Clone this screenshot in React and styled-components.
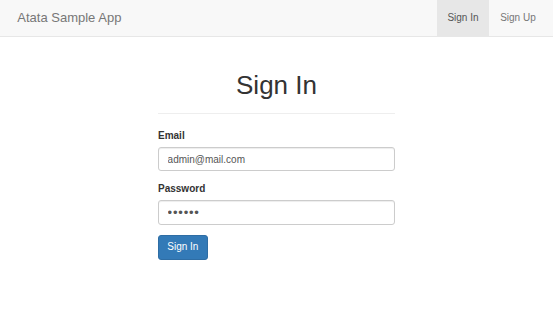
import React from 'react';
import styled, { createGlobalStyle } from 'styled-components';

const GlobalStyle = createGlobalStyle`
  * { box-sizing: border-box; }
  body {
    margin: 0;
    background: #fff;
    color: #333;
    font-family: "Liberation Sans", Arial, sans-serif;
    font-size: 10px;
    line-height: 14.3px;
  }
`;

const Navbar = styled.nav`
  display: flex;
  justify-content: space-between;
  align-items: stretch;
  height: 37px;
  padding: 0 6.5px;
  background: #f8f8f8;
  border-bottom: 1px solid #e7e7e7;
`;

const Brand = styled.a`
  display: flex;
  align-items: center;
  padding: 0 10.8px;
  font-size: 13px;
  color: #777;
  text-decoration: none;
`;

const NavList = styled.ul`
  display: flex;
  margin: 0;
  padding: 0;
  list-style: none;
`;

const NavItem = styled.li`
  display: flex;
  align-items: center;
  padding: 0 10.8px;
  color: ${p => (p.$active ? '#555' : '#777')};
  background: ${p => (p.$active ? '#e7e7e7' : 'transparent')};
`;

const Main = styled.main`
  width: 237px;
  margin: 0 auto;
`;

const PageHeader = styled.div`
  margin-top: 34px;
  margin-bottom: 15px;
  padding-bottom: 6.5px;
  border-bottom: 1px solid #eee;
`;

const Title = styled.h1`
  margin: 0 0 7px;
  font-size: 26px;
  font-weight: 500;
  line-height: 28.5px;
  text-align: center;
  color: #333;
`;

const FormGroup = styled.div`
  margin-bottom: 10.8px;
`;

const Label = styled.label`
  display: block;
  margin-bottom: 3.6px;
  font-weight: bold;
`;

const Input = styled.input`
  display: block;
  width: 100%;
  height: 24.5px;
  padding: 4.3px 8.6px;
  font-family: inherit;
  font-size: ${p => (p.type === 'password' ? '13px' : '10px')};
  letter-spacing: ${p => (p.type === 'password' ? '0.8px' : 'normal')};
  color: #555;
  background: #fff;
  border: 1px solid #ccc;
  border-radius: 3px;
  box-shadow: inset 0 1px 1px rgba(0, 0, 0, 0.075);
  outline: none;
`;

const Button = styled.button`
  display: inline-block;
  height: 24.5px;
  padding: 0 8.3px;
  font-family: inherit;
  font-size: 10px;
  line-height: 14.3px;
  color: #fff;
  background: #337ab7;
  border: 1px solid #2e6da4;
  border-radius: 3px;
  cursor: pointer;
`;

export default function App() {
  return (
    <>
      <GlobalStyle />
      <Navbar>
        <Brand href="#">Atata Sample App</Brand>
        <NavList>
          <NavItem $active>Sign In</NavItem>
          <NavItem>Sign Up</NavItem>
        </NavList>
      </Navbar>
      <Main>
        <PageHeader>
          <Title>Sign In</Title>
        </PageHeader>
        <form onSubmit={e => e.preventDefault()}>
          <FormGroup>
            <Label htmlFor="email">Email</Label>
            <Input id="email" type="text" defaultValue="admin@mail.com" />
          </FormGroup>
          <FormGroup>
            <Label htmlFor="password">Password</Label>
            <Input id="password" type="password" defaultValue="abc123" />
          </FormGroup>
          <Button type="submit">Sign In</Button>
        </form>
      </Main>
    </>
  );
}
